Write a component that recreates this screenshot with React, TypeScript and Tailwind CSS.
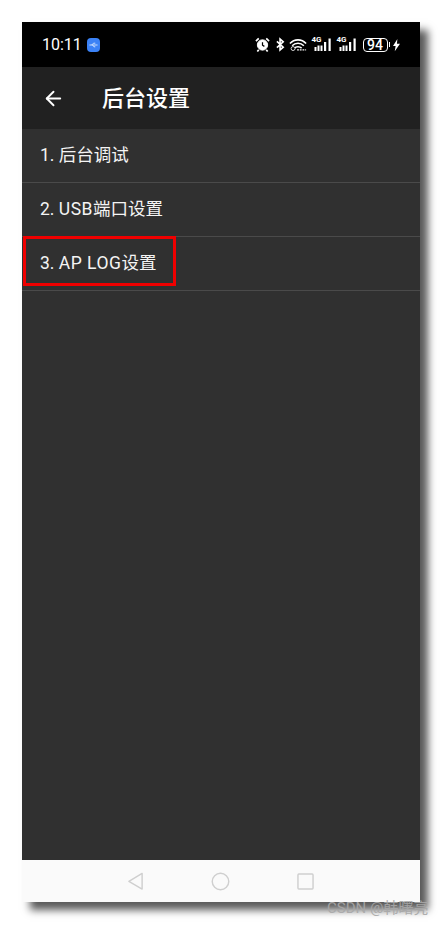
import { ArrowLeft } from "lucide-react";

const font = { fontFamily: '"Roboto", "Noto Sans CJK SC", sans-serif' };

const items = [
  { no: "1.", latin: "", cjk: "后台调试" },
  { no: "2.", latin: "USB", cjk: "端口设置" },
  { no: "3.", latin: "AP LOG", cjk: "设置" },
];

// --- status bar icons ---
const Signal = () => (
  <span className="relative block w-[20px] h-[15px]">
    <span className="absolute left-0 -top-px text-[8px] leading-[8px] font-bold text-white">4G</span>
    <svg viewBox="0 0 20 15" className="absolute inset-0 w-[20px] h-[15px]" fill="#fff">
      <rect x="2.500" y="10" width="2" height="4" />
      <rect x="5.500" y="8.500" width="2" height="5.500" />
      <rect x="8.500" y="8.500" width="2" height="5.500" />
      <rect x="12" y="5" width="2.200" height="9" />
      <rect x="16.500" y="1.500" width="2.200" height="12.500" />
    </svg>
  </span>
);

const StatusIcons = () => (
  <div className="flex items-center text-white">
    <svg viewBox="0 0 16 16" className="w-[15px] h-[15px]" fill="none" stroke="#fff">
      <circle cx="8" cy="8.500" r="5.500" fill="#fff" />
      <path d="M8 5.500v3.200l2 1.300" stroke="#000" strokeWidth="1.300" />
      <path d="M1 4.500 4 1.500M15 4.500l-3-3M4 13.500l-1.500 2M12 13.500l1.500 2" strokeWidth="1.800" />
    </svg>
    <svg viewBox="0 0 10 15" className="w-[9px] h-[15px] ml-[6px]" fill="none" stroke="#fff" strokeWidth="1.800">
      <path d="M1 4l7 6.500-3.500 3V1.500L8 4.500 1 11" />
    </svg>
    <svg viewBox="0 0 20 15" className="w-[18px] h-[15px] ml-[4px]" fill="none" stroke="#fff" strokeWidth="1.700">
      <path d="M1 6.500C6 1 14 1 19 6.500M3.500 9C7 5.200 13 5.200 16.500 9M6 11.500c2-2 6-2 8 0" />
      <circle cx="4.500" cy="12" r="2.200" strokeWidth="0.900" fill="#000" />
      <path d="M9 13.500h10" strokeWidth="1.500" strokeDasharray="2 1" />
    </svg>
    <div className="ml-[5px]">
      <Signal />
    </div>
    <div className="ml-[5px]">
      <Signal />
    </div>
    <div className="ml-[6px] w-[25px] h-[14px] rounded-[4px] border border-white flex items-center justify-center text-[14px] leading-none font-medium">
      94
    </div>
    <span className="ml-px w-[1.500px] h-[5px] bg-white" />
    <svg viewBox="0 0 8 14" className="w-[7px] h-[14px] ml-[3px]" fill="#fff">
      <path d="M5 0 0 8h3l-1 6 6-8.500H4.500z" />
    </svg>
  </div>
);

const NavBar = () => (
  <div className="h-[42px] bg-[#fafafa] flex items-center justify-center gap-[67px] pr-[1px]">
    <svg viewBox="0 0 18 20" className="w-[17px] h-[19px]" fill="none" stroke="#cfcfcf" strokeWidth="1.500">
      <path d="M16 1.500v16.500L2 9.800z" strokeLinejoin="round" />
    </svg>
    <svg viewBox="0 0 20 20" className="w-[19px] h-[19px]" fill="none" stroke="#cfcfcf" strokeWidth="1.500">
      <circle cx="10" cy="10" r="8.700" />
    </svg>
    <svg viewBox="0 0 18 18" className="w-[17px] h-[17px]" fill="none" stroke="#cfcfcf" strokeWidth="1.500">
      <rect x="1" y="1" width="16" height="16" rx="1" />
    </svg>
  </div>
);

export default function App() {
  return (
    <div className="relative w-[443px] h-[925px] bg-white pt-[22px] pl-[22px] overflow-hidden" style={font}>
      <main className="w-[398px] h-[880px] flex flex-col bg-[#303030] shadow-[8px_8px_8px_rgba(0,0,0,0.65)]">
        <div className="h-[45px] bg-black flex items-center justify-between pl-[20px] pr-[20px] shrink-0">
          <div className="flex items-center gap-[5px]">
            <span className="text-white text-[16px]">10:11</span>
            <span className="w-[13px] h-[14px] rounded-[4px] bg-[#3b82f6] flex items-center justify-center">
              <svg viewBox="0 0 10 6" className="w-[9px] h-[6px]" fill="none" stroke="#dbeafe" strokeWidth="1">
                <path d="M0.500 3h9M3 3l2-2h2M4 3l1.500 2h1.500" />
              </svg>
            </span>
          </div>
          <StatusIcons />
        </div>

        <header className="h-[62px] bg-[#212121] flex items-center pl-[20px] shrink-0">
          <ArrowLeft className="w-[23px] h-[23px] text-white" strokeWidth={2} />
          <h1 className="ml-[37px] mt-px text-white text-[22px] font-medium">后台设置</h1>
        </header>

        <ul className="flex-1">
          {items.map((t) => (
            <li
              key={t.no}
              className="h-[54px] flex items-center pl-[18px] text-[#f4f4f4] text-[17.500px] border-b border-[#4a4a4a] whitespace-pre"
            >
              <span>{t.no} </span>
              <span className="tracking-[0.5px]">{t.latin}</span>
              <span>{t.cjk}</span>
            </li>
          ))}
        </ul>

        <NavBar />
      </main>

      {/* annotation over the third row */}
      <div className="absolute left-[23px] top-[236px] w-[153px] h-[50px] border-[3px] border-[#f00000]" />

      <span className="absolute left-[327px] top-[899px] text-[15px] leading-[18px] text-[#a8a8a8] opacity-90">
        CSDN @韩曙亮
      </span>
    </div>
  );
}
